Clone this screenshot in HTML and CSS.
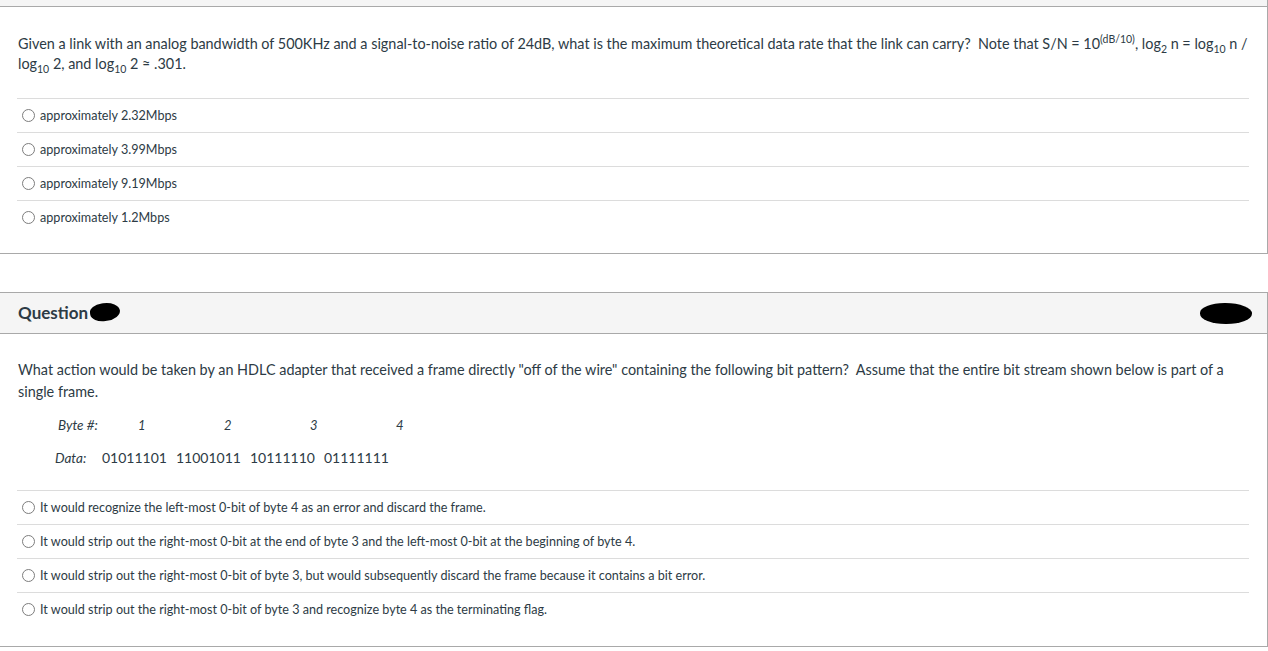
FILE: index.html
```html
<!DOCTYPE html>
<html>
<head>
<meta charset="utf-8">
<link rel="stylesheet" href="styles.css">
</head>
<body>
<div class="page">
  <div class="question first">
    <div class="q-header stub"></div>
    <div class="q-body">
      <div class="q-text q1">Given a link with an analog bandwidth of 500KHz and a signal-to-noise ratio of 24dB, what is the maximum theoretical data rate that the link can carry?&nbsp; Note that S/N = 10<sup>(dB/10)</sup>, log<sub>2</sub> n = log<sub>10</sub> n / log<sub>10</sub> 2, and log<sub>10</sub> 2 ≈ .301.</div>
      <ul class="answers">
        <li class="answer"><span class="radio"></span><span class="label">approximately 2.32Mbps</span></li>
        <li class="answer"><span class="radio"></span><span class="label">approximately 3.99Mbps</span></li>
        <li class="answer"><span class="radio"></span><span class="label">approximately 9.19Mbps</span></li>
        <li class="answer"><span class="radio"></span><span class="label">approximately 1.2Mbps</span></li>
      </ul>
    </div>
  </div>

  <div class="question second">
    <div class="q-header">
      <h2 class="q-title">Question<span class="blot blot-a"></span></h2>
      <span class="blot blot-b"></span>
    </div>
    <div class="q-body">
      <div class="q-text">What action would be taken by an HDLC adapter that received a frame directly "off of the wire" containing the following bit pattern?&nbsp; Assume that the entire bit stream shown below is part of a single frame.</div>
      <div class="bits">
        <div class="bits-row bytes">
          <span class="bits-label">Byte #:</span>
          <span class="byte-num">1</span>
          <span class="byte-num">2</span>
          <span class="byte-num">3</span>
          <span class="byte-num">4</span>
        </div>
        <div class="bits-row data">
          <span class="bits-label">Data:</span>
          <span class="byte-val">01011101</span>
          <span class="byte-val">11001011</span>
          <span class="byte-val">10111110</span>
          <span class="byte-val">01111111</span>
        </div>
      </div>
      <ul class="answers">
        <li class="answer"><span class="radio"></span><span class="label">It would recognize the left-most 0-bit of byte 4 as an error and discard the frame.</span></li>
        <li class="answer"><span class="radio"></span><span class="label">It would strip out the right-most 0-bit at the end of byte 3 and the left-most 0-bit at the beginning of byte 4.</span></li>
        <li class="answer"><span class="radio"></span><span class="label">It would strip out the right-most 0-bit of byte 3, but would subsequently discard the frame because it contains a bit error.</span></li>
        <li class="answer"><span class="radio"></span><span class="label">It would strip out the right-most 0-bit of byte 3 and recognize byte 4 as the terminating flag.</span></li>
      </ul>
    </div>
  </div>
</div>
</body>
</html>
```

FILE: styles.css
```css
* { box-sizing: border-box; }
html, body { margin: 0; padding: 0; background: #fff; }
body {
  font-family: Lato, "Noto Sans", sans-serif;
  color: #2d3b45;
  width: 1268px;
  height: 651px;
  overflow: hidden;
}
.page { display: flex; flex-direction: column; }

.question {
  border: 1px solid #a9a9a9;
  border-left: none;
  background: #fff;
}
.question.first { border-top: none; }
.question.first .q-body { padding-bottom: 19px; }
.question.second { margin-top: 38px; }

.q-header {
  background: #f5f5f5;
  border-bottom: 1px solid #a9a9a9;
  height: 41px;
  display: flex;
  align-items: center;
  justify-content: space-between;
  padding: 0 15px 0 18px;
}
.q-header.stub { height: 7px; }

.q-title {
  margin: 0 0 2px 0;
  font-size: 17px;
  font-weight: 700;
  display: flex;
  align-items: center;
}
.blot {
  display: inline-block;
  background: #000;
  border-radius: 50%;
}
.blot-a { width: 30px; height: 18px; margin-left: 2px; border-radius: 45% 55% 50% 50%; transform: rotate(-8deg); }
.blot-b { width: 52px; height: 21px; border-radius: 48% 52% 50% 50%; }

.q-body { padding: 25px 18px 20px 18px; }

.q-text {
  font-size: 14.4px;
  line-height: 22px;
}
.q-text sup, .q-text sub { font-size: 10.5px; line-height: 0; }

.q1 { line-height: 20px; margin-top: 2px; }

.bits {
  margin-top: 5px;
}
.bits-row {
  display: flex;
  align-items: center;
  height: 33px;
}
.bits-label { font-style: italic; font-size: 13.5px; }
.bytes { padding-left: 40px; }
.bytes .bits-label { width: 80px; }
.byte-num { width: 86px; font-style: italic; font-size: 13px; }
.data { padding-left: 37px; gap: 9px; }
.data .bits-label { width: 38px; }
.byte-val { font-size: 14px; }

.answers {
  list-style: none;
  margin: 16px 0 0 -1px;
  padding: 0;
}
.q1 + .answers { margin-top: 24px; }
.answer {
  border-top: 1px solid #dcdcdc;
  height: 34px;
  display: flex;
  align-items: center;
  font-size: 12.6px;
  padding-left: 5px;
}
.radio {
  width: 13px;
  height: 13px;
  border: 1px solid #7d7d7d;
  border-radius: 50%;
  margin-right: 5px;
  flex: none;
}
.label { line-height: 16px; }
```
